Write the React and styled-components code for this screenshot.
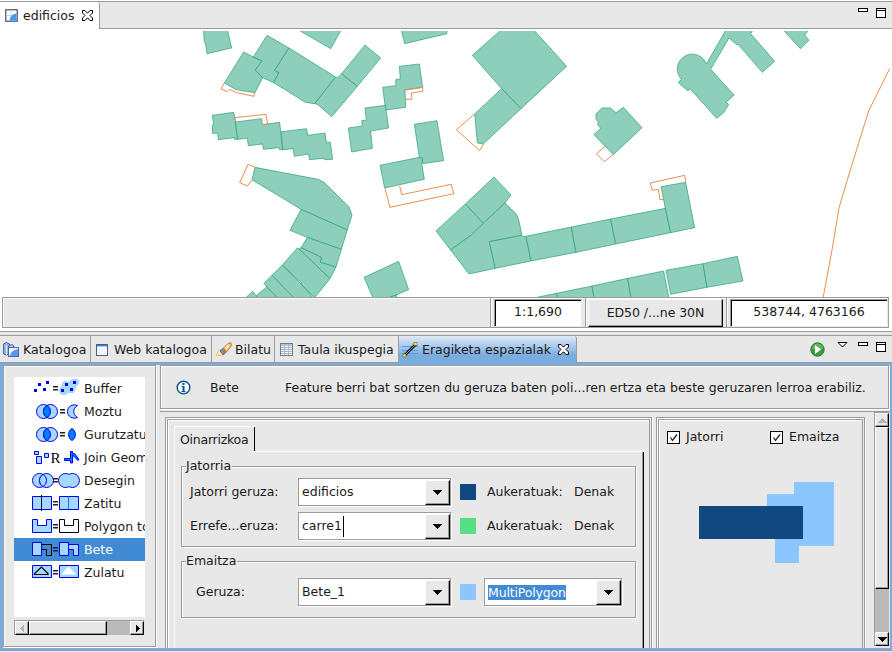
import React from 'react';
import styled, { createGlobalStyle, css } from 'styled-components';

const c = {
  face: '#e8e8e8',
  line: '#9c9a9a',
  blue: '#7aace0',
  select: '#418bd4',
  navy: '#10487f',
  sky: '#8cc6ff',
  green: '#56df83',
  trough: '#bcbab8',
};

const Global = createGlobalStyle`
  html, body { margin: 0; padding: 0; overflow: hidden; background: ${c.face}; }
  * { box-sizing: border-box; }
  body { font: 12.5px/16px "DejaVu Sans", sans-serif; color: #1a1a1a; }
  svg { display: block; flex: none; }
`;

const Window = styled.div`
  width: 892px;
  height: 652px;
  display: flex;
  flex-direction: column;
  background: ${c.face};
  overflow: hidden;
`;

const etched = css`
  border: 1px solid ${c.line};
  box-shadow: 1px 1px 0 #fff, inset 1px 1px 0 #fff;
`;

const Label = styled.span`
  white-space: pre;
  letter-spacing: ${(p) => p.$track || 0}px;
`;

/* ---------- editor part ---------- */

const Editor = styled.section`
  height: 332px;
  padding-top: 1px;
  display: flex;
  flex-direction: column;
  background: #fff;
  border-bottom: 1px solid ${c.line};
`;

const EditorTabs = styled.div`
  height: 28px;
  display: flex;
  border-top: 1px solid ${c.line};
  background: #fff;
`;

const EditorTab = styled.div`
  width: 100px;
  display: flex;
  align-items: center;
  gap: 5px;
  padding: 0 0 0 5px;
  border-right: 1px solid ${c.line};
  border-top-right-radius: 3px;
`;

const Filler = styled.div`
  flex: 1;
  display: flex;
  justify-content: flex-end;
  gap: 8px;
  padding: 6px 6px 0 0;
  background: ${c.face};
  border-bottom: 1px solid ${c.line};
`;

const ViewActions = styled.div`
  display: flex;
  gap: 12px;
  margin-right: 2px;
`;

const MapArea = styled.div`
  height: 268px;
  padding-top: 2px;
`;

const StatusBar = styled.div`
  height: 31px;
  margin: 0 3px 0 2px;
  display: flex;
  border: 1px solid ${c.line};
  background: ${c.face};
  box-shadow: inset 1px 1px 0 #fff;
`;

const StatusSpace = styled.div`
  width: 488px;
  flex: none;
  border-right: 1px solid ${c.line};
  box-shadow: 1px 0 0 #fff, inset 1px 1px 0 #fff;
`;

const StatusField = styled.div`
  width: ${(p) => p.$w}px;
  flex: none;
  height: 28px;
  margin: 1px 0 0 ${(p) => p.$ml}px;
  display: flex;
  align-items: center;
  justify-content: center;
  background: #fff;
  border: 1px solid ${c.line};
  border-right-color: ${c.face};
  border-bottom-color: ${c.face};
  box-shadow: inset 1px 1px 0 #000, inset -1px -1px 0 #fff;
  padding-bottom: 2px;
`;

const Divider = styled.div`
  width: 2px;
  flex: none;
  margin-left: ${(p) => p.$ml}px;
  background: ${c.line};
  border-right: 1px solid #fff;
`;

const StatusButton = styled.div`
  width: 135px;
  flex: none;
  height: 28px;
  margin: 1px 0 0 1px;
  display: flex;
  align-items: center;
  justify-content: center;
  border: 1px solid #fff;
  border-right-color: #000;
  border-bottom-color: #000;
  box-shadow: inset -1px -1px 0 ${c.line};
`;

/* ---------- view part ---------- */

const ViewPart = styled.section`
  flex: 1;
  display: flex;
  flex-direction: column;
  padding-top: 3px;
`;

const ViewTabs = styled.div`
  height: 28px;
  display: flex;
  border-top: 1px solid ${c.line};
`;

const ViewTab = styled.div`
  width: ${(p) => p.$w}px;
  display: flex;
  align-items: center;
  gap: ${(p) => p.$gap ?? 4}px;
  padding: 1px 0 0 ${(p) => p.$pl ?? 3}px;
  border-right: 1px solid ${c.line};
  border-bottom: 1px solid ${c.line};
  ${(p) =>
    p.$active &&
    css`
      background: linear-gradient(#dfeaf7, ${c.blue} 75%);
      border-bottom-color: ${c.blue};
      border-top-right-radius: 3px;
    `}
`;

const CloseButton = styled.div`
  margin-left: 3px;
`;

const ViewBody = styled.div`
  height: 287px;
  display: flex;
  gap: 4px;
  border: solid ${c.blue};
  border-width: 2px 2px 2px 3px;
  overflow: hidden;
`;

const BottomEdge = styled.div`
  height: 2px;
  border-top: 1px solid ${c.line};
`;

const OperationsPanel = styled.div`
  ${etched}
  width: 153px;
  height: 282px;
  padding: 11px 0 0 10px;
`;

const OperationList = styled.div`
  width: 131px;
  height: 240px;
  background: #fff;
  overflow: hidden;
`;

const Operation = styled.div`
  height: 23px;
  width: 300px;
  display: flex;
  align-items: center;
  padding-left: 18px;
  gap: 4px;
  background: ${(p) => (p.$selected ? c.select : 'transparent')};
  color: ${(p) => (p.$selected ? '#fff' : 'inherit')};
`;

const HScroll = styled.div`
  width: 130px;
  height: 15px;
  margin-top: 3px;
  display: flex;
  border: solid ${c.line};
  border-width: 1px 0 0 1px;
  background: ${c.trough};
`;

const VScroll = styled.div`
  width: 15px;
  height: 234px;
  margin: 0 0 0 9px;
  display: flex;
  flex-direction: column;
  border: solid ${c.line};
  border-width: 1px 0 0 1px;
  background: ${c.trough};
`;

const Raised = styled.div`
  width: ${(p) => p.$w}px;
  height: ${(p) => p.$h}px;
  flex: none;
  display: flex;
  align-items: center;
  justify-content: center;
  background: ${c.face};
  border: 1px solid #fff;
  border-right-color: #000;
  border-bottom-color: #000;
  box-shadow: inset -1px -1px 0 ${c.line};
`;

const Push = styled.div`
  flex: 1;
`;

const Details = styled.div`
  flex: 1;
  display: flex;
  flex-direction: column;
`;

const InfoBar = styled.div`
  ${etched}
  width: 729px;
  height: 44px;
  display: flex;
  align-items: center;
  padding: 1px 0 0 15px;
`;

const InfoName = styled.div`
  width: 75px;
  margin-left: 19px;
`;

const ScrollArea = styled.div`
  width: 730px;
  height: 237px;
  margin-top: 2px;
  display: flex;
  border-top: 1px solid ${c.line};
  overflow: hidden;
`;

const DoubleFrame = styled.div`
  ${etched}
  width: ${(p) => p.$w}px;
  height: 260px;
  flex: none;
  margin: 5px 0 0 ${(p) => p.$ml}px;
  padding: 1px;
`;

const FrameInner = styled.div`
  height: 256px;
  ${etched}
  box-shadow: inset 1px 1px 0 #fff;
  padding: ${(p) => p.$pad};
`;

const FolderTab = styled.div`
  width: 81px;
  height: 25px;
  padding: 5px 0 0 5px;
  border: solid #fff;
  border-width: 1px 0 0 1px;
  border-top-left-radius: 2px;
  box-shadow: inset -1px 0 0 #000;
`;

const FolderTop = styled.div`
  width: 80px;
  height: 1px;
  margin: 0 0 -1px 1px;
  background: ${c.face};
  position: relative;
`;

const FolderPage = styled.div`
  width: 470px;
  height: 230px;
  border: solid #fff;
  border-width: 1px 0 0 1px;
  box-shadow: inset -1px 0 0 #000, inset -2px 0 0 ${c.line};
  padding: 6px 0 0 6px;
`;

const Group = styled.fieldset`
  ${etched}
  width: 455px;
  height: ${(p) => p.$h}px;
  margin: 0 0 ${(p) => p.$mb || 0}px;
  padding: ${(p) => p.$pt}px 0 0 8px;
  min-width: 0;
`;

const Legend = styled.legend`
  height: 16px;
  padding: 0 1px 0 0;
  margin-left: -4px;
  background: ${c.face};
`;

const FormRow = styled.div`
  height: 28px;
  margin-bottom: 6px;
  display: flex;
  align-items: center;
`;

const FieldName = styled.div`
  width: 108px;
  padding-left: ${(p) => p.$indent || 0}px;
`;

const Combo = styled.div`
  width: ${(p) => p.$w}px;
  height: 28px;
  display: flex;
  align-items: center;
  padding: 0 0 0 3px;
  background: #fff;
  border: 1px solid ${c.line};
  box-shadow: 1px 1px 0 #fff;
`;

const ComboValue = styled.div`
  flex: 1;
  display: flex;
`;

const Caret = styled.div`
  width: 1px;
  height: 21px;
  margin: -2px 0 -2px 1px;
  background: #000;
`;

const SelectedText = styled.span`
  height: 15px;
  line-height: 16px;
  letter-spacing: -0.15px;
  background: ${c.select};
  color: #fff;
`;

const Swatch = styled.div`
  width: 16px;
  height: 16px;
  margin: 0 8px 1px 9px;
  background: ${(p) => p.$color};
`;

const Counter = styled.div`
  width: 90px;
  padding-left: 3px;
`;

const Checks = styled.div`
  display: flex;
  height: 14px;
`;

const Check = styled.div`
  width: 103px;
  flex: none;
  display: flex;
  align-items: center;
  gap: 6px;
`;

const CheckBox = styled.div`
  width: 13px;
  height: 13px;
  background: #fff;
  border: 1px solid #000;
`;

const Preview = styled.div`
  padding: 38px 0 0 32px;
`;

/* ---------- drawings ---------- */

const Arrow = ({ d, off }) => (
  <svg width="9" height="7" viewBox="0 0 9 7" shapeRendering="crispEdges">
    <path d={d} fill={off ? '#b4b2b2' : '#000'} />
  </svg>
);
const UP = 'M4 1h1l4 5H0z';
const DOWN = 'M0 1h9L5 6H4z';
const LEFT = 'M6 0v7L2 4V3z';
const RIGHT = 'M3 0v7l4-3V3z';

const CloseIcon = () => (
  <svg width="11" height="11" viewBox="0 0 11 11">
    <path d="M.5 .5h2.500l2.500 2.700L8 .5h2.500V3L8 5.500l2.500 2.500v2.500H8L5.500 7.800 3 10.500H.5V8L3 5.500.5 3z" fill="#fff" stroke="#000" />
  </svg>
);

const MinIcon = () => (
  <svg width="10" height="12" viewBox="0 0 10 12" shapeRendering="crispEdges">
    <rect x=".5" y=".5" width="9" height="3" fill="#fff" stroke="#000" />
  </svg>
);

const MaxIcon = () => (
  <svg width="10" height="12" viewBox="0 0 10 12" shapeRendering="crispEdges">
    <rect x=".5" y=".5" width="9" height="9" fill="#fff" stroke="#000" />
    <path d="M0 2.500h10" stroke="#000" />
  </svg>
);

const MenuIcon = () => (
  <svg width="11" height="8" viewBox="0 0 11 8">
    <path d="M1 .5h9L5.500 5z" fill="#fff" stroke="#000" />
  </svg>
);

const RunIcon = () => (
  <svg width="15" height="15" viewBox="0 0 15 15">
    <circle cx="7.500" cy="7.500" r="6.700" fill="#3f9a42" stroke="#2c7a35" />
    <path d="M2 7a5.500 5.500 0 0 1 11 0" fill="#7cc46b" opacity=".6" />
    <path d="M5 3v9l6-4.500z" fill="#fff" />
  </svg>
);

const InfoIcon = () => (
  <svg width="15" height="15" viewBox="0 0 15 15">
    <circle cx="7.500" cy="7.500" r="6.300" fill="#fff" stroke="#0a5597" strokeWidth="1.500" />
    <path d="M6.500 3h2v2h-2zM5.500 6h3v5h1v1h-4v-1h1V7h-1z" fill="#0a5597" />
  </svg>
);

const MapIcon = () => (
  <svg width="13" height="13" viewBox="0 0 13 13">
    <rect x=".75" y=".75" width="11.500" height="11.500" fill="#fff" stroke="#4f5f7c" strokeWidth="1.300" />
    <path d="M6 1.500v10M1.500 6.500h10" stroke="#ccd0d8" />
    <path d="M4.500 11.500C5 8 7 5 11.500 4.500v7z" fill="#3f9cf5" />
  </svg>
);

const CatalogIcon = () => (
  <svg width="16" height="16" viewBox="0 0 16 16">
    <path d="M.5 2l3-1.500 3 1.500v10l-3 1-3-1z" fill="#8fb4de" stroke="#3c6aa8" />
    <path d="M3.500 3v10" stroke="#dfeaf7" />
    <path d="M5.500 4l3-1.500 2 1v10h-5z" fill="#a9c4e6" stroke="#3c6aa8" />
    <rect x="5.500" y="5.500" width="10" height="9" fill="#f4f6fb" stroke="#5b5ea8" />
    <path d="M7 14c1-4 3-6 8-7v7z" fill="#4c9cf0" />
  </svg>
);

const WebIcon = () => (
  <svg width="12" height="12" viewBox="0 0 12 12" shapeRendering="crispEdges">
    <rect x=".5" y=".5" width="11" height="11" fill="#f1f8fb" stroke="#47618c" />
    <path d="M1 1.500h10" stroke="#3d7fc4" />
    <path d="M1 2.500h10" stroke="#a8d0ec" />
  </svg>
);

const SearchIcon = () => (
  <svg width="17" height="16" viewBox="0 0 17 16">
    <path d="M1 13.500l2.500-5 3-1.500 4 4-3 2.500z" fill="#fbe6b4" stroke="#e2b45c" strokeWidth=".7" />
    <path d="M5 9l3.500-3 3 4L8 13z" fill="#8c8894" stroke="#6b6670" strokeWidth=".8" />
    <path d="M8.500 6l4.500-4.500 3-.8.2 3.300-4.700 6z" fill="#fbc878" stroke="#c47a2c" />
    <path d="M10.500 6.500l3-3" stroke="#fff" strokeWidth="1.300" />
  </svg>
);

const TableIcon = () => (
  <svg width="13" height="13" viewBox="0 0 13 13" shapeRendering="crispEdges">
    <rect x=".5" y=".5" width="12" height="12" fill="#fff" stroke="#6d7b92" />
    <path d="M1 2h11" stroke="#b9c4d6" strokeWidth="2" />
    <path d="M1 4.500h11M1 6.500h11M1 8.500h11M1 10.500h11M4.500 1v11M8.500 1v11" stroke="#a9b5c8" />
  </svg>
);

const SpatialIcon = () => (
  <svg width="16" height="16" viewBox="0 0 16 16">
    <path d="M0 4.500h16M0 8.500h16M0 11.500h16" stroke="#4aa0ee" />
    <path d="M2.500 13.500L14 2" stroke="#000" strokeWidth="2.600" />
    <path d="M2.500 13.500L14 2" stroke="#ddd" strokeWidth=".7" />
    <path d="M1 12h3v3H1zM12 .5h3v3h-3z" fill="#ffee10" stroke="#444" strokeWidth=".5" />
  </svg>
);

const B = '#0000f0';
const L = '#a6d8ff';
const M = '#0080ff';

const Equals = ({ x }) => <path d={`M${x} 9.750h5M${x} 12.750h5`} stroke="#222" strokeWidth="1.500" />;

const drawings = {
  buffer: (
    <>
      <path d="M27 14c0-4 3-4 3-7s4-4 6-2c2-2 5-4 9-3s2 6 0 7-1 6-4 7-4-1-6 1-8 1-8-3z" fill={L} />
      <path d="M2 12h3v3H2zM6 6h3v3H6zM11 11h3v3h-3zM14 4h3v3h-3zM29 12h3v3h-3zM33 6h3v3h-3zM38 11h3v3h-3zM41 4h3v3h-3z" fill={B} />
      <Equals x={21} />
    </>
  ),
  moztu: (
    <>
      <circle cx="11.500" cy="11.500" r="7" fill={L} stroke={B} />
      <circle cx="18.500" cy="11.500" r="7" fill={L} stroke={B} />
      <path d="M15 5.400a7 7 0 0 1 0 12.200a7 7 0 0 1 0-12.200z" fill={M} stroke={B} />
      <Equals x={28} />
      <path d="M45.500 5.500c-5-2-10 1-10 6s5 8 10 6c-5-3-5-9 0-12z" fill={L} stroke={B} />
    </>
  ),
  gurutzatu: (
    <>
      <circle cx="11.500" cy="11.500" r="7" fill={L} stroke={B} />
      <circle cx="18.500" cy="11.500" r="7" fill={L} stroke={B} />
      <path d="M15 5.400a7 7 0 0 1 0 12.200a7 7 0 0 1 0-12.200z" fill={M} stroke={B} />
      <Equals x={28} />
      <path d="M40 5.500a7 7 0 0 1 0 12a7 7 0 0 1 0-12z" fill={M} stroke={B} />
    </>
  ),
  join: (
    <>
      <path d="M2.500 5.500h4v3h-4zM4.500 10.500h5v7h-5zM12.500 7.500h4v4h-4z" fill={L} stroke={B} />
      <text x="18.500" y="16.500" fontFamily="Liberation Serif" fontSize="15" fill="#000">R</text>
      <path d="M32.500 12.500h6v-7h2v2h2l4.500 6-1.200 1-5.300-5.500v8h-2v-2.500h-6z" fill={M} stroke={B} />
    </>
  ),
  desegin: (
    <>
      <circle cx="7.500" cy="11.500" r="7" fill={L} stroke={B} />
      <circle cx="14.500" cy="11.500" r="7" fill={L} stroke={B} />
      <path d="M11 5.400a7 7 0 0 1 0 12.200a7 7 0 0 1 0-12.200z" fill={L} stroke={B} />
      <Equals x={21} />
      <path d="M37 5.400a7 7 0 1 1 0 12.200a7 7 0 1 1 0-12.200z" fill={L} stroke={B} />
    </>
  ),
  zatitu: (
    <>
      <path d="M.5 4.500h19v13H.5zM27.500 4.500h19v13h-19z" fill={L} stroke={B} />
      <path d="M9.500 3v16" stroke="#000" />
      <path d="M36.500 5v12" stroke={M} />
      <Equals x={21} />
    </>
  ),
  polygon: (
    <>
      <path d="M.5 4.500h5v6h9v-6h5v13H.5z" fill={L} stroke={B} />
      <path d="M27.500 4.500h5v6h9v-6h5v13h-19z" fill="#fff" stroke="#000" />
      <Equals x={21} />
    </>
  ),
  bete: (
    <>
      <path d="M.5 4.500h9v13H.5z" fill={L} stroke={B} />
      <path d="M9.500 6.500h10v11h-5v-6h-5" fill="none" stroke="#000" />
      <path d="M27.500 4.500h9v2h10v11h-5v-6h-5v6h-9z" fill={L} stroke={B} />
      <path d="M36.500 6v6" stroke={B} />
      <Equals x={21} />
    </>
  ),
  zulatu: (
    <>
      <path d="M.5 4.500h19v12H.5zM27.500 4.500h19v12h-19z" fill={L} stroke={B} />
      <path d="M2.500 13.500v-1L9.500 6l6.500 6.500v1z" fill={L} stroke="#000" strokeWidth="1.200" />
      <path d="M29 13.500L36.500 5.500 44 13.500z" fill="#fff" />
      <Equals x={21} />
    </>
  ),
};

const OperationIcon = ({ kind }) => (
  <svg width="48" height="23" viewBox="0 0 48 23">{drawings[kind]}</svg>
);

/* Each sheet holds parcels in thirds of a pixel, relative to its own origin. */
const sheets = [
  {
    at: [200, 28],
    parcels: [
      '10,0 13,43 16,43 21,77 95,60 81,0',
      '131,72 160,87 186,99 166,126 188,149 165,194 118,187 104,183 73,165',
      '201,22 267,60 224,127 237,134 221,164 188,149 166,126 186,99 160,87',
      '267,60 407,147 344,227 316,223 221,164 237,134 224,127',
      '407,147 413,149 425,137 472,175 395,266 352,229 344,227',
      '495,51 542,90 472,175 425,137',
      '285,0 301,9 392,62 422,9 427,0',
      '602,0 614,47 741,17 739,0',
      '598,115 658,108 668,178 615,186 617,238 557,246 548,178 588,173 587,155 601,153',
      '495,240 556,232 566,300 512,309 517,361 455,372 445,300 487,294 485,278 499,276',
      '37,262 101,253 106,278 113,334 103,334 103,329 55,335 53,316 37,316 37,291 41,291',
      '106,282 185,272 187,290 239,283 248,365 238,365 238,359 190,364 188,348 145,353 142,331 113,334',
      '244,311 320,302 323,322 375,315 379,343 391,343 398,394 374,395 372,391 328,395 326,378 283,385 279,362 248,365',
      '643,289 711,278 731,398 668,407 667,391 658,388',
      '540,412 658,388 668,393 665,405 673,454 554,480',
    ],
    lines: [
      '73,165 63,183 82,191 88,184 110,194 162,205 164,194',
      '613,186 668,178 668,190 634,195 636,214 617,214',
      '106,280 104,269 198,259 203,289 187,290',
    ],
  },
  {
    at: [200, 150],
    parcels: [
      '165,52 354,88 372,97 447,170 456,195 442,240 303,178 156,89',
      '303,178 442,240 424,298 322,262 270,241',
      '322,262 424,298 408,351 361,337 364,322 303,293',
      '297,297 303,293 364,322 361,337 408,351 390,386',
      '292,294 297,297 390,386 344,443 304,403 304,398 247,345',
      '247,345 304,403 345,450 285,450 216,376',
      '216,376 288,450 240,450 200,411 192,400',
      '200,411 240,450 160,450 170,436',
      '130,450 158,424 172,441 170,450',
      '492,382 596,334 626,419 590,434 560,446 520,446',
      '560,446 590,434 592,450',
    ],
    lines: [
      '165,51 144,43 119,98 142,108 157,89',
      '555,115 570,172 761,131 754,103 605,134 599,108',
    ],
  },
  {
    at: [430, 28],
    parcels: [
      '127,82 220,0 306,0 410,115 273,242 215,182',
      '215,182 273,242 160,348 142,345 134,258',
      '516,240 542,240 558,254 580,238 636,299 550,380 492,320 512,301 503,290 505,282 498,274 498,258',
    ],
    lines: ['134,258 79,305 149,368 160,348', '525,356 499,377 523,401 549,380'],
  },
  {
    at: [430, 150],
    parcels: [
      '106,162 192,81 243,135 225,159 160,220',
      '18,243 106,162 160,220 124,255 62,300',
      '225,159 257,190 265,205 276,256 178,275 196,355 117,372 62,300 124,255 160,220',
      '178,275 276,256 279,260 288,259 303,333 196,355',
      '288,259 424,231 438,307 303,333',
      '424,231 542,207 557,282 438,307',
      '542,207 706,175 722,248 557,282',
      '693,110 767,97 794,233 722,248 706,175',
      '300,446 380,430 384,455 300,455',
      '380,430 486,408 494,455 384,455',
      '486,408 593,385 605,455 494,455',
      '593,385 701,363 719,455 605,455',
      '708,361 819,341 831,412 722,433',
      '819,341 922,319 939,393 831,412',
    ],
    lines: ['767,97 764,76 661,99 667,121 685,118 690,149 702,148'],
  },
  {
    at: [650, 0],
    parcels: ['395,85 451,146 477,121 464,105 480,85'],
    lines: ['719,206 656,333 601,510 567,624 546,750 519,895'],
  },
];

const CityMap = () => (
  <svg width="892" height="266" viewBox="0 31 892 266">
    {sheets.map((s) => (
      <g key={s.at.join()} transform={`translate(${s.at.join()}) scale(.33333)`} strokeWidth="3">
        {s.parcels.map((p) => (
          <polygon key={p} points={p} fill="#8dcfbb" stroke="#229c74" strokeOpacity=".65" />
        ))}
        {s.lines.map((p) => (
          <polyline key={p} points={p} fill="none" stroke="#e98d50" />
        ))}
      </g>
    ))}
    <path
      transform="translate(650,0) scale(.33333)"
      d="M228 85L222 100L169 192L166 185A45 45 0 1 0 95 239L84 247L114 273L120 266L200 355L220 339L236 314L229 307L252 285L182 208L237 114L261 135L264 133L337 217L374 184L302 101L312 85z"
      fill="#8dcfbb"
      stroke="#229c74"
      strokeOpacity=".65"
      strokeWidth="3"
    />
  </svg>
);

/* ---------- composition ---------- */

const operations = [
  ['buffer', 'Buffer'],
  ['moztu', 'Moztu'],
  ['gurutzatu', 'Gurutzatu'],
  ['join', 'Join Geometries'],
  ['desegin', 'Desegin'],
  ['zatitu', 'Zatitu'],
  ['polygon', 'Polygon to line'],
  ['bete', 'Bete'],
  ['zulatu', 'Zulatu'],
];

const ComboBox = ({ width, children }) => (
  <Combo $w={width}>
    <ComboValue>{children}</ComboValue>
    <Raised $w={25} $h={25}>
      <Arrow d={DOWN} />
    </Raised>
  </Combo>
);

const CheckItem = ({ label }) => (
  <Check>
    <CheckBox>
      <svg width="11" height="11" viewBox="0 0 11 11">
        <path d="M2.500 5.500l2 3L9 2.500" fill="none" stroke="#222" strokeWidth="1.300" />
      </svg>
    </CheckBox>
    <Label>{label}</Label>
  </Check>
);

export default function App() {
  return (
    <Window>
      <Global />
      <Editor>
        <EditorTabs>
          <EditorTab>
            <MapIcon />
            <Label>edificios</Label>
            <CloseButton><CloseIcon /></CloseButton>
          </EditorTab>
          <Filler>
            <MinIcon />
            <MaxIcon />
          </Filler>
        </EditorTabs>
        <MapArea>
          <CityMap />
        </MapArea>
        <StatusBar>
          <StatusSpace />
          <StatusField $w={88} $ml={3}><Label>1:1,690</Label></StatusField>
          <Divider $ml={3} />
          <StatusButton><Label $track={-0.05}>ED50 /...ne 30N</Label></StatusButton>
          <Divider $ml={3} />
          <StatusField $w={158} $ml={2}><Label>538744, 4763166</Label></StatusField>
        </StatusBar>
      </Editor>

      <ViewPart>
        <ViewTabs>
          <ViewTab $w={91}><CatalogIcon /><Label $track={0.1}>Katalogoa</Label></ViewTab>
          <ViewTab $w={121} $pl={5} $gap={6}><WebIcon /><Label>Web katalogoa</Label></ViewTab>
          <ViewTab $w={63} $gap={3}><SearchIcon /><Label>Bilatu</Label></ViewTab>
          <ViewTab $w={124} $pl={5} $gap={5}><TableIcon /><Label>Taula ikuspegia</Label></ViewTab>
          <ViewTab $w={178} $active>
            <SpatialIcon />
            <Label>Eragiketa espazialak</Label>
            <CloseButton><CloseIcon /></CloseButton>
          </ViewTab>
          <Filler>
            <ViewActions>
              <RunIcon />
              <MenuIcon />
            </ViewActions>
            <MinIcon />
            <MaxIcon />
          </Filler>
        </ViewTabs>
        <ViewBody>
          <OperationsPanel>
            <OperationList>
              {operations.map(([kind, name]) => (
                <Operation key={kind} $selected={kind === 'bete'}>
                  <OperationIcon kind={kind} />
                  <Label>{name}</Label>
                </Operation>
              ))}
            </OperationList>
            <HScroll>
              <Raised $w={14} $h={14}><Arrow d={LEFT} off /></Raised>
              <Raised $w={78} $h={14} />
              <Push />
              <Raised $w={14} $h={14}><Arrow d={RIGHT} /></Raised>
            </HScroll>
          </OperationsPanel>
          <Details>
            <InfoBar>
              <InfoIcon />
              <InfoName>Bete</InfoName>
              <Label>Feature berri bat sortzen du geruza baten poli...ren ertza eta beste geruzaren lerroa erabiliz.</Label>
            </InfoBar>
            <ScrollArea>
              <DoubleFrame $w={487} $ml={5}>
                <FrameInner $pad="6px 0 0 6px">
                  <FolderTab><Label $track={-0.25}>Oinarrizkoa</Label></FolderTab>
                  <FolderTop />
                  <FolderPage>
                    <Group $h={89} $mb={6} $pt={4}>
                      <Legend><Label>Jatorria</Label></Legend>
                      <FormRow>
                        <FieldName><Label>Jatorri geruza:</Label></FieldName>
                        <ComboBox width={153}><Label>edificios</Label></ComboBox>
                        <Swatch $color={c.navy} />
                        <Counter><Label>Aukeratuak:</Label></Counter>
                        <Label>Denak</Label>
                      </FormRow>
                      <FormRow>
                        <FieldName><Label>Errefe...eruza:</Label></FieldName>
                        <ComboBox width={153}><Label>carre1</Label><Caret /></ComboBox>
                        <Swatch $color={c.green} />
                        <Counter><Label>Aukeratuak:</Label></Counter>
                        <Label>Denak</Label>
                      </FormRow>
                    </Group>
                    <Group $h={65} $pt={9}>
                      <Legend><Label>Emaitza</Label></Legend>
                      <FormRow>
                        <FieldName $indent={6}><Label>Geruza:</Label></FieldName>
                        <ComboBox width={153}><Label>Bete_1</Label></ComboBox>
                        <Swatch $color={c.sky} />
                        <ComboBox width={138}><SelectedText>MultiPolygon</SelectedText></ComboBox>
                      </FormRow>
                    </Group>
                  </FolderPage>
                </FrameInner>
              </DoubleFrame>
              <DoubleFrame $w={209} $ml={4}>
                <FrameInner $pad="10px 0 0 8px">
                  <Checks>
                    <CheckItem label="Jatorri" />
                    <CheckItem label="Emaitza" />
                  </Checks>
                  <Preview>
                    <svg width="135" height="81" viewBox="0 0 135 81" shapeRendering="crispEdges">
                      <path d="M68 12H95V0H135V64H100V81H76V40H68z" fill={c.sky} />
                      <path d="M0 24H104V57H0z" fill={c.navy} />
                    </svg>
                  </Preview>
                </FrameInner>
              </DoubleFrame>
              <VScroll>
                <Raised $w={14} $h={14}><Arrow d={UP} off /></Raised>
                <Raised $w={14} $h={162} />
                <Push />
                <Raised $w={14} $h={14}><Arrow d={DOWN} /></Raised>
              </VScroll>
            </ScrollArea>
          </Details>
        </ViewBody>
        <BottomEdge />
      </ViewPart>
    </Window>
  );
}
